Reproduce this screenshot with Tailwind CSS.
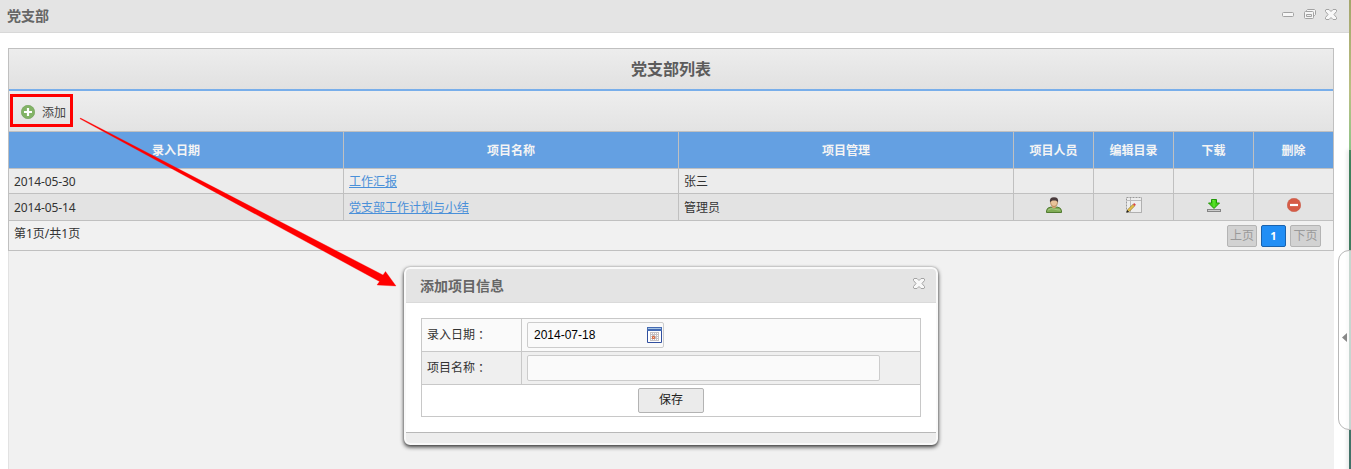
<!DOCTYPE html>
<html lang="zh-CN">
<head>
<meta charset="utf-8">
<title>党支部</title>
<script src="https://cdn.jsdelivr.net/npm/@tailwindcss/browser@4"></script>
</head>
<body class="relative flex h-[469px] w-[1351px] overflow-hidden bg-white font-['Noto_Sans','Noto_Sans_CJK_SC',sans-serif] text-xs leading-4 text-[#333]">
<svg class="hidden">
  <symbol id="close" viewBox="0 0 12 11"><path d="M1 .5h3L6 2.500 8 .5h3l.5.500v1.500L9 5.500l2.500 3v1.500l-.5.500H8L6 8.500l-2 2H1l-.5-.5V8.500L3 5.500.5 2.500V1z" fill="#f8f8f8" stroke="#a4a4a4"/></symbol>
</svg>

<div class="flex w-[1349px] flex-col">
  <header class="flex h-[33px] shrink-0 items-center justify-between border-b border-[#d8d8d8] bg-[#e4e4e4] pr-3 pl-[7px]">
    <h1 class="text-sm font-bold text-[#666]">党支部</h1>
    <div class="flex items-center gap-[9px] pb-1">
      <svg class="mr-px h-[5px] w-3" viewBox="0 0 12 5"><rect x=".5" y=".5" width="11" height="4" rx="1" fill="#f6f6f6" stroke="#a2a2a2"/></svg>
      <svg class="h-[10px] w-3" viewBox="0 0 12 10"><path d="M2.500 2.500v-1l1-1h7l1 1v4l-1 1h-1" fill="#f6f6f6" stroke="#a2a2a2"/><rect x=".5" y="2.500" width="9" height="7" rx="1" fill="#f6f6f6" stroke="#a2a2a2"/><path d="M2.500 5.500h5v2h-5z" fill="#eee" stroke="#a2a2a2"/></svg>
      <svg class="h-[11px] w-3"><use href="#close"/></svg>
    </div>
  </header>

  <main class="ml-2 mt-[15px] flex w-[1326px] flex-1 flex-col bg-[#f1f1f1]">
    <section class="border border-[#c0c0c0]">
      <h2 class="flex h-10 items-center justify-center bg-linear-to-b from-[#ededed] to-[#e1e1e1] text-base font-bold text-[#5c5c5c]">党支部列表</h2>
      <div class="flex h-[42px] items-start border-t-2 border-[#78aeea] bg-linear-to-b from-[#eeeeee] to-[#e3e3e3] pt-[3px] pl-px">
        <button class="flex h-[33px] w-[63px] items-center gap-[7px] border-3 border-[#f00] pt-[3px] pl-2 text-[#444]">
          <svg class="size-[14px] shrink-0" viewBox="0 0 14 14"><circle cx="7" cy="7" r="6.700" fill="#82b366" stroke="#6b9e51" stroke-width=".6"/><path d="M7 3v8M3 7h8" stroke="#fff" stroke-width="2.200"/></svg>
          <span class="pt-0.5 whitespace-nowrap">添加</span>
        </button>
      </div>
      <div class="grid grid-cols-[335px_335px_335px_80px_80px_80px_79px] grid-rows-[37px_25px_27px] border-t border-[#c0c0c0]">
        <div class="flex items-center justify-center border-r border-b border-[#c0c0c0] bg-[#64a0e2] pt-0.5 font-bold text-[#f4f4f4]">录入日期</div>
        <div class="flex items-center justify-center border-r border-b border-[#c0c0c0] bg-[#64a0e2] pt-0.5 font-bold text-[#f4f4f4]">项目名称</div>
        <div class="flex items-center justify-center border-r border-b border-[#c0c0c0] bg-[#64a0e2] pt-0.5 font-bold text-[#f4f4f4]">项目管理</div>
        <div class="flex items-center justify-center border-r border-b border-[#c0c0c0] bg-[#64a0e2] pt-0.5 font-bold text-[#f4f4f4]">项目人员</div>
        <div class="flex items-center justify-center border-r border-b border-[#c0c0c0] bg-[#64a0e2] pt-0.5 font-bold text-[#f4f4f4]">编辑目录</div>
        <div class="flex items-center justify-center border-r border-b border-[#c0c0c0] bg-[#64a0e2] pt-0.5 font-bold text-[#f4f4f4]">下载</div>
        <div class="flex items-center justify-center border-b border-[#c0c0c0] bg-[#64a0e2] pt-0.5 font-bold text-[#f4f4f4]">删除</div>

        <div class="flex items-center border-r border-b border-[#c0c0c0] bg-[#ececec] pt-0.5 pl-[5px] tracking-[-0.12px]">2014-05-30</div>
        <div class="flex items-center border-r border-b border-[#c0c0c0] bg-[#ececec] pt-0.5 pl-[5px]"><a class="text-[#4a90d9] underline">工作汇报</a></div>
        <div class="flex items-center border-r border-b border-[#c0c0c0] bg-[#ececec] pt-0.5 pl-[5px]">张三</div>
        <div class="border-r border-b border-[#c0c0c0] bg-[#ececec]"></div>
        <div class="border-r border-b border-[#c0c0c0] bg-[#ececec]"></div>
        <div class="border-r border-b border-[#c0c0c0] bg-[#ececec]"></div>
        <div class="border-b border-[#c0c0c0] bg-[#ececec]"></div>

        <div class="flex items-center border-r border-b border-[#c0c0c0] bg-[#e3e3e3] pt-0.5 pl-[5px] tracking-[-0.12px]">2014-05-14</div>
        <div class="flex items-center border-r border-b border-[#c0c0c0] bg-[#e3e3e3] pt-0.5 pl-[5px]"><a class="text-[#4a90d9] underline">党支部工作计划与小结</a></div>
        <div class="flex items-center border-r border-b border-[#c0c0c0] bg-[#e3e3e3] pt-0.5 pl-[5px]">管理员</div>
        <div class="flex justify-center border-r border-b border-[#c0c0c0] bg-[#e3e3e3] pt-[3px] pl-px">
          <svg class="size-4" viewBox="0 0 16 16"><path d="M.5 15.500v-2Q1 10.500 5 10l3 1 3-1q4 .5 4.500 3.500v2z" fill="#80ac55" stroke="#527b32"/><path d="M2 13q3-2 6-1t6 1" stroke="#a7c985" fill="none"/><path d="M6 8h4v2.500L8 11.500l-2-1z" fill="#d8a673"/><ellipse cx="8" cy="5.500" rx="3.500" ry="4" fill="#e9c39a" stroke="#a67848" stroke-width=".7"/><path d="M4 5.500Q3 .2 8 .2t4 5.300Q11 3.600 9.500 3.500h-3Q5 4 4 5.500z" fill="#493a3c"/></svg>
        </div>
        <div class="flex justify-center border-r border-b border-[#c0c0c0] bg-[#e3e3e3] pt-[3px]">
          <svg class="size-4" viewBox="0 0 16 16"><path d="M.5.5h15v15H.5z" fill="#ededed" stroke="#999" stroke-dasharray="2 1"/><path d="M4.500 1v14M1 3.500h14" stroke="#bbb"/><path d="M1 15.500h14.500V1" stroke="#b0b0b0" fill="none"/><path d="M1 15l.8-2.500L7 7.300l1.700 1.700-5.200 5.200z" fill="#e4c047" stroke="#86682b" stroke-width=".6"/><path d="M7 7.300l1.200-1.200 1.700 1.700L8.700 9z" fill="#db4545"/><path d="M.3 15.700l1-2.700 1.700 1.700z" fill="#222"/></svg>
        </div>
        <div class="flex justify-center border-r border-b border-[#c0c0c0] bg-[#e3e3e3] pt-1 pl-px">
          <svg class="h-[15px] w-[14px]" viewBox="0 0 14 15"><path d="M4.500 1.500h5V5h3L7 10.500 1.500 5h3z" fill="#43d316" stroke="#219707"/><path d="M5.500 2.500h1.500V9" stroke="#7ef04a" fill="none" opacity=".7"/><rect x=".5" y="11.500" width="13" height="2" fill="#ccc" stroke="#858585"/></svg>
        </div>
        <div class="flex justify-center border-b border-[#c0c0c0] bg-[#e3e3e3] pt-1">
          <svg class="size-[14px]" viewBox="0 0 14 14"><circle cx="7" cy="7" r="6.800" fill="#d65c47" stroke="#bf4c38" stroke-width=".4"/><path d="M3 7h8" stroke="#fff" stroke-width="2.200"/></svg>
        </div>
      </div>
      <footer class="flex h-[29px] justify-between pr-3 pl-[5px]">
        <span class="pt-[5px]">第1页/共1页</span>
        <nav class="flex gap-1 pt-1">
          <button class="flex h-[22px] w-[30px] items-center justify-center rounded-[2px] border border-[#b4b4b4] bg-[#d2d2d2] whitespace-nowrap text-[#999]">上页</button>
          <button class="flex h-[22px] w-[25px] items-center justify-center rounded-[2px] border border-[#1962ad] bg-[#218ef5] pb-px text-[11px] font-bold text-white">1</button>
          <button class="flex h-[22px] w-[31px] items-center justify-center rounded-[2px] border border-[#b4b4b4] bg-[#d2d2d2] whitespace-nowrap text-[#999]">下页</button>
        </nav>
      </footer>
    </section>
    <div class="flex-1 border-l border-[#e2e2e2]"></div>
  </main>
</div>
<div class="w-0.5 bg-linear-to-b from-[#a9ab70] via-[#3f805b] via-35% to-[#427068] shadow-[-1px_150px_4px_#0003]">
  <div class="h-[150px] bg-linear-to-b from-[#a3a56b] via-[#b9bf83] via-60% to-[#8ec489]"></div>
</div>

<!-- collapse handle on the right edge -->
<div class="absolute top-[250px] left-[1338px] flex h-[180px] w-[24px] items-center rounded-[11px] border border-[#b8b8b8] bg-white/70 pl-[3px]">
  <svg class="-mt-1.5 h-[9px] w-[5px]" viewBox="0 0 5 9"><path d="M5 0v9L0 4.500z" fill="#888"/></svg>
</div>

<!-- pointer from the add button to the dialog -->
<svg class="absolute top-0 left-0 h-[469px] w-[420px]" viewBox="0 0 420 469"><path d="M80 118.800L80.500 118 383 275 385.500 271.500 396 286 377 285 379.500 281.500z" fill="#f00" stroke="#f00" stroke-width=".3"/></svg>

<section class="absolute top-[267px] left-[404px] flex h-[178px] w-[534px] flex-col overflow-hidden rounded-[6px] border-2 border-[#f9f9f9] bg-white shadow-[0_2px_4px_#333,0_0_2px_#aaa]">
  <header class="flex h-[34px] shrink-0 items-center justify-between border-b border-[#dadada] bg-[#e4e4e4] pr-[11px] pl-[14px]">
    <h3 class="text-sm font-bold text-[#666]">添加项目信息</h3>
    <svg class="mb-1 h-[11px] w-3"><use href="#close"/></svg>
  </header>
  <form class="mx-[15px] mt-[15px] grid h-[99px] grid-cols-[100px_398px] grid-rows-[33px_33px_31px] border border-[#c8c8c8]">
    <label class="flex items-center border-r border-b border-[#c8c8c8] bg-[#fafafa] pl-[5px]">录入日期<span lang="zh-TW" class="font-['Noto_Sans_CJK_TC',sans-serif]">：</span></label>
    <div class="flex items-center border-b border-[#c8c8c8] bg-[#fafafa] pl-[5px]">
      <div class="flex h-[26px] w-[137px] items-center justify-between rounded-[2px] border border-[#ccc] bg-[#fafafa] pr-px pl-1.5 font-['Liberation_Sans',sans-serif] text-black">
        <span>2014-07-18</span>
        <svg class="h-4 w-[15px]" viewBox="0 0 15 16"><path d="M.5.5h14v15H.5z" fill="#fff" stroke="#314f9f"/><path d="M0 0h15v4H0z" fill="#456bb3"/><path d="M1 1.500h13" stroke="#a9c6e5"/><path d="M3 5h9v9H3z" fill="#c5c2c5"/><path d="M4 6h1v1H4zM6 6h1v1H6zM8 6h1v1H8zM10 6h1v1h-1zM4 8h1v1H4zM8 8h1v1H8zM10 8h1v1h-1zM4 10h1v1H4zM10 10h1v1h-1zM4 12h1v1H4zM6 12h1v1H6zM8 12h1v1H8zM10 12h1v1h-1z" fill="#fff"/><path d="M5.500 9.500h2v2h-2z" fill="#fbd1b4" stroke="#d66842"/></svg>
      </div>
    </div>
    <label class="flex items-center border-r border-b border-[#c8c8c8] bg-[#efefef] pl-[5px]">项目名称<span lang="zh-TW" class="font-['Noto_Sans_CJK_TC',sans-serif]">：</span></label>
    <div class="flex items-center border-b border-[#c8c8c8] bg-[#efefef] pl-[5px]">
      <input class="h-[26px] w-[353px] rounded-[2px] border border-[#ccc] bg-[#fafafa]">
    </div>
    <div class="col-span-2 flex items-center justify-center">
      <button type="button" class="flex h-[25px] w-[66px] items-center justify-center rounded-[2px] border border-[#b3b3b3] bg-[#ebebeb] pb-0.5 text-[#222]">保存</button>
    </div>
  </form>
  <footer class="mt-[15px] flex-1 border-t border-[#b8b8b8] bg-[#ededed]"></footer>
</section>
</body>
</html>
